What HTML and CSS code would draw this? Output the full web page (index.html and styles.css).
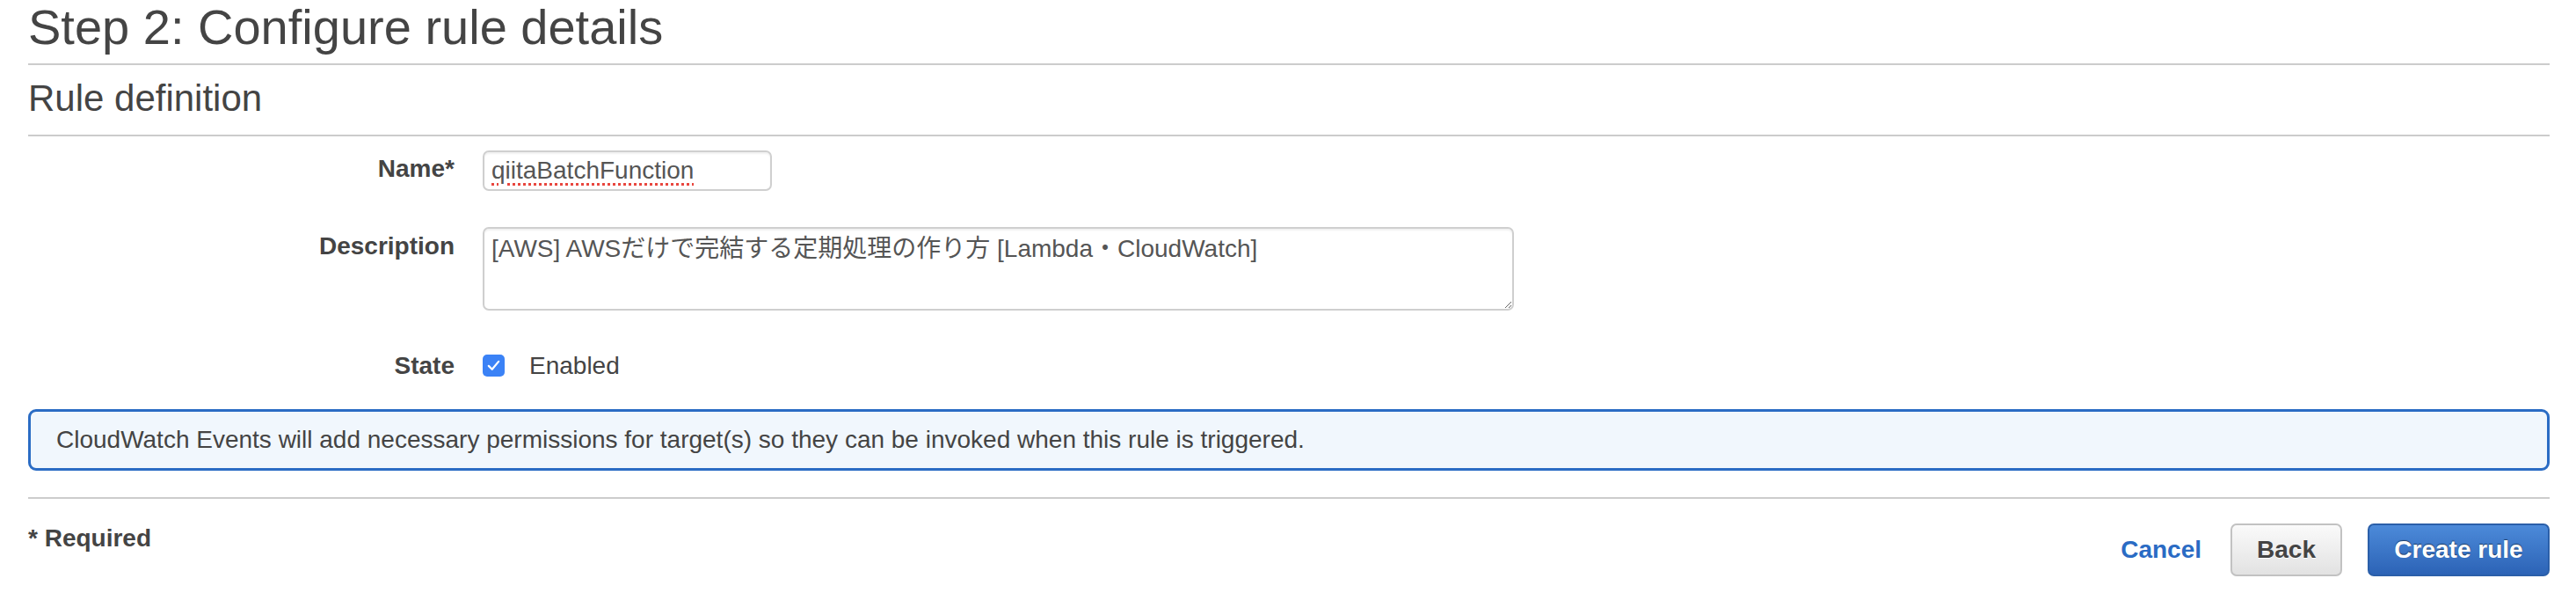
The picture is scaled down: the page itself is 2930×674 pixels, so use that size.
FILE: index.html
```html
<!DOCTYPE html>
<html lang="en">
<head>
<meta charset="utf-8">
<title>Step 2: Configure rule details</title>
<link rel="stylesheet" href="styles.css">
</head>
<body>
<div class="page">
  <h1 class="title">Step 2: Configure rule details</h1>
  <h2 class="section-title">Rule definition</h2>

  <div class="form">
    <div class="row row-name">
      <label class="label">Name*</label>
      <div class="field">
        <div class="text-input"><span class="misspelled">qiitaBatchFunction</span></div>
      </div>
    </div>
    <div class="row row-desc">
      <label class="label label-desc">Description</label>
      <div class="field">
        <textarea class="textarea">[AWS] AWSだけで完結する定期処理の作り方 [Lambda・CloudWatch]</textarea>
      </div>
    </div>
    <div class="row row-state">
      <label class="label">State</label>
      <div class="field field-check">
        <span class="checkbox"><svg viewBox="0 0 24 24" width="17" height="17"><path d="M4 12.5 L9.5 18 L20 5.5" fill="none" stroke="#fff" stroke-width="3.2" stroke-linecap="round" stroke-linejoin="round"/></svg></span>
        <span class="check-label">Enabled</span>
      </div>
    </div>
  </div>

  <div class="info">CloudWatch Events will add necessary permissions for target(s) so they can be invoked when this rule is triggered.</div>

  <div class="footer">
    <div class="required">* Required</div>
    <div class="actions">
      <a class="link-cancel" href="#">Cancel</a>
      <button class="btn btn-back" type="button">Back</button>
      <button class="btn btn-primary" type="button">Create rule</button>
    </div>
  </div>
</div>
</body>
</html>
```

FILE: styles.css
```css
html, body {
  margin: 0;
  padding: 0;
  background: #fff;
}

body {
  font-family: "Liberation Sans", Arial, "Noto Sans CJK JP", sans-serif;
  color: #444;
  font-size: 28px;
  line-height: 32px;
}

.page {
  padding: 0 30px 0 32px;
}

.title {
  margin: 0;
  font-size: 56px;
  line-height: 62px;
  font-weight: normal;
  color: #444;
  padding-bottom: 10px;
  border-bottom: 2px solid #cccccc;
}

.section-title {
  margin: 14px 0 0 0;
  font-size: 42px;
  line-height: 48px;
  font-weight: normal;
  color: #444;
  padding-bottom: 17px;
  border-bottom: 2px solid #cccccc;
}

.form {
  display: flex;
  flex-direction: column;
}

.row {
  display: flex;
  align-items: flex-start;
  gap: 32px;
}

.label {
  width: 485px;
  flex: none;
  text-align: right;
  font-weight: bold;
  color: #444;
  padding-top: 5px;
}

.row-name {
  margin-top: 16px;
}

.row-desc {
  margin-top: 41px;
}

.label-desc {
  padding-top: 6px;
}

.row-state {
  margin-top: 45px;
  align-items: center;
}

.row-state .label {
  padding-top: 2px;
}

.text-input {
  box-sizing: border-box;
  width: 329px;
  height: 46px;
  border: 2px solid #cfcfcf;
  border-radius: 7px;
  padding: 5px 8px 0 8px;
  color: #555;
  background: #fff;
  box-shadow: inset 0 2px 2px rgba(0, 0, 0, 0.06);
}

.misspelled {
  text-decoration: underline dotted #e8473f;
  text-decoration-thickness: 3px;
  text-underline-offset: 5px;
}

.textarea {
  display: block;
  box-sizing: border-box;
  width: 1173px;
  height: 95px;
  margin: 0;
  border: 2px solid #cfcfcf;
  border-radius: 7px;
  padding: 7px 8px;
  font-family: "Liberation Sans", Arial, "Noto Sans CJK JP", sans-serif;
  font-size: 28px;
  line-height: 32px;
  color: #555;
  background: #fff;
  box-shadow: inset 0 2px 2px rgba(0, 0, 0, 0.06);
  resize: both;
}

.field-check {
  display: flex;
  align-items: center;
  gap: 28px;
  height: 32px;
}

.checkbox {
  width: 25px;
  height: 25px;
  border-radius: 5px;
  background: #3b82f6;
  display: flex;
  align-items: center;
  justify-content: center;
}

.check-label {
  color: #444;
  padding-top: 2px;
}

.info {
  margin-top: 33px;
  background: #f1f7fd;
  border: 3px solid #2b6cc4;
  border-radius: 9px;
  padding: 16px 29px;
  color: #444;
}

.footer {
  margin-top: 30px;
  border-top: 2px solid #cccccc;
  padding-top: 28px;
  display: flex;
  justify-content: space-between;
  align-items: flex-start;
}

.required {
  font-weight: bold;
  color: #444;
  padding-top: 1px;
}

.actions {
  display: flex;
  align-items: center;
}

.link-cancel {
  color: #2a6bc4;
  font-weight: bold;
  text-decoration: none;
  margin-right: 33px;
}

.btn {
  box-sizing: border-box;
  height: 60px;
  border-radius: 7px;
  font-family: "Liberation Sans", Arial, sans-serif;
  font-size: 28px;
  font-weight: bold;
  line-height: 32px;
  padding: 0;
  text-align: center;
  white-space: nowrap;
  cursor: pointer;
}

.btn-back {
  width: 127px;
  background: linear-gradient(#fafafa, #e2e2e2);
  border: 2px solid #c2c2c2;
  color: #444;
  text-shadow: 0 1px 0 #fff;
  margin-right: 29px;
}

.btn-primary {
  width: 207px;
  background: linear-gradient(#4c8ad9, #2c63b6);
  border: 2px solid #2b5fa9;
  color: #fff;
  text-shadow: 0 -1px 1px rgba(0, 0, 0, 0.5);
}
```
